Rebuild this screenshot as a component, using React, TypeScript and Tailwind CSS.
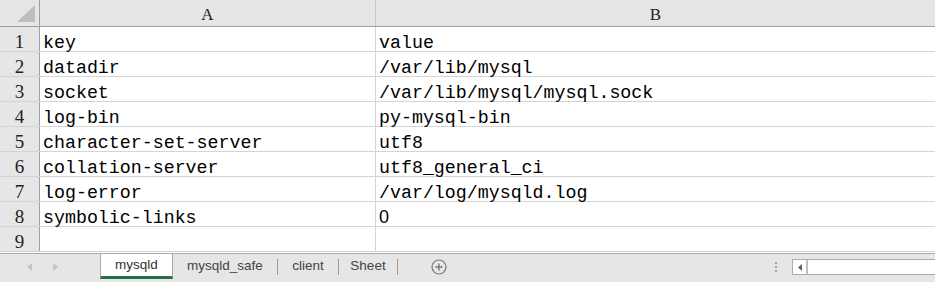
import React from 'react';

const rows: [string, string][] = [
  ['key', 'value'],
  ['datadir', '/var/lib/mysql'],
  ['socket', '/var/lib/mysql/mysql.sock'],
  ['log-bin', 'py-mysql-bin'],
  ['character-set-server', 'utf8'],
  ['collation-server', 'utf8_general_ci'],
  ['log-error', '/var/log/mysqld.log'],
  ['symbolic-links', '0'],
  ['', ''],
];

const cellFont = "font-['Liberation_Mono',monospace] text-[18.3px] text-black";

export default function App() {
  return (
    <div className="w-[935px] h-[282px] bg-white overflow-hidden flex flex-col select-none">
      {/* column header */}
      <div className="flex h-[27px] bg-[#e6e6e6] border-b border-[#9f9f9f]">
        <div className="w-[40px] shrink-0 border-r border-[#9f9f9f] flex items-end justify-end pr-[4px] pb-[4px]">
          <svg width="18" height="17" viewBox="0 0 18 17">
            <polygon points="18,0 18,17 0,17" fill="#bdbdbd" />
          </svg>
        </div>
        <div className="w-[336px] shrink-0 border-r border-[#c8c8c8] flex items-center justify-center font-['Liberation_Serif',serif] text-[17px] text-[#222] pt-[3px]">A</div>
        <div className="flex-1 flex items-center justify-center font-['Liberation_Serif',serif] text-[17px] text-[#222] pt-[3px]">B</div>
      </div>

      {/* rows */}
      {rows.map(([k, v], i) => (
        <div key={i} className="flex h-[25px] border-b border-[#d4d4d4]">
          <div className="w-[40px] shrink-0 bg-[#e6e6e6] border-r border-[#9f9f9f] flex items-end justify-center font-['Liberation_Serif',serif] text-[19px] text-[#222] leading-none">
            {i + 1}
          </div>
          <div className={`w-[336px] shrink-0 border-r border-[#d4d4d4] pl-[3px] flex items-end leading-[15px] ${cellFont}`}>{k}</div>
          <div className={`flex-1 pl-[3px] flex items-end ${v === '0' ? "font-['Liberation_Sans',sans-serif] text-[18px] text-black leading-none" : `leading-[15px] ${cellFont}`}`}>{v}</div>
        </div>
      ))}

      {/* tab bar */}
      <div className="h-[1px] bg-white" />
      <div className="flex-1 bg-[#e6e6e6] border-t border-[#ababab] flex items-start font-['Liberation_Sans',sans-serif] text-[13.5px] text-[#444]">
        <div className="w-[100px] h-[25px] flex items-center gap-[21px] pl-[27px]">
          <svg width="5" height="8" viewBox="0 0 5 8"><polygon points="5,0 5,8 0,4" fill="#c4c4c4" /></svg>
          <svg width="5" height="8" viewBox="0 0 5 8"><polygon points="0,0 0,8 5,4" fill="#c4c4c4" /></svg>
        </div>
        <div className="w-[73px] h-[25px] bg-white border-x border-[#ababab] border-b-[3px] border-b-[#217346] flex items-center justify-center text-[#333] pt-[1px]">
          mysqld
        </div>
        <div className="flex items-center h-[25px]">
          <div className="w-[104px] text-center">mysqld_safe</div>
          <div className="w-px h-[16px] bg-[#9a9a9a]" />
          <div className="w-[60px] text-center">client</div>
          <div className="w-px h-[16px] bg-[#9a9a9a]" />
          <div className="w-[58px] text-center">Sheet</div>
          <div className="w-px h-[16px] bg-[#9a9a9a]" />
        </div>
        <div className="h-[25px] flex items-center ml-[33px]">
          <svg width="16" height="16" viewBox="0 0 16 16">
            <circle cx="8" cy="8" r="7" fill="none" stroke="#777" strokeWidth="1.2" />
            <path d="M8 4.5v7M4.5 8h7" stroke="#777" strokeWidth="1.4" />
          </svg>
        </div>
        <div className="flex-1" />
        <div className="h-[25px] flex flex-col justify-center gap-[2px] mr-[15px]">
          <div className="w-[2px] h-[2px] bg-[#a0a0a0]" />
          <div className="w-[2px] h-[2px] bg-[#a0a0a0]" />
          <div className="w-[2px] h-[2px] bg-[#a0a0a0]" />
        </div>
        <div className="mt-[5px] w-[143px] h-[16px] flex border border-[#ababab] border-r-0 bg-white">
          <div className="w-[15px] h-full flex items-center justify-center border-r-[2px] border-[#c0c0c0]">
            <svg width="4" height="7" viewBox="0 0 4 7"><polygon points="4,0 4,7 0,3.5" fill="#606060" /></svg>
          </div>
          <div className="flex-1" />
        </div>
      </div>
    </div>
  );
}
